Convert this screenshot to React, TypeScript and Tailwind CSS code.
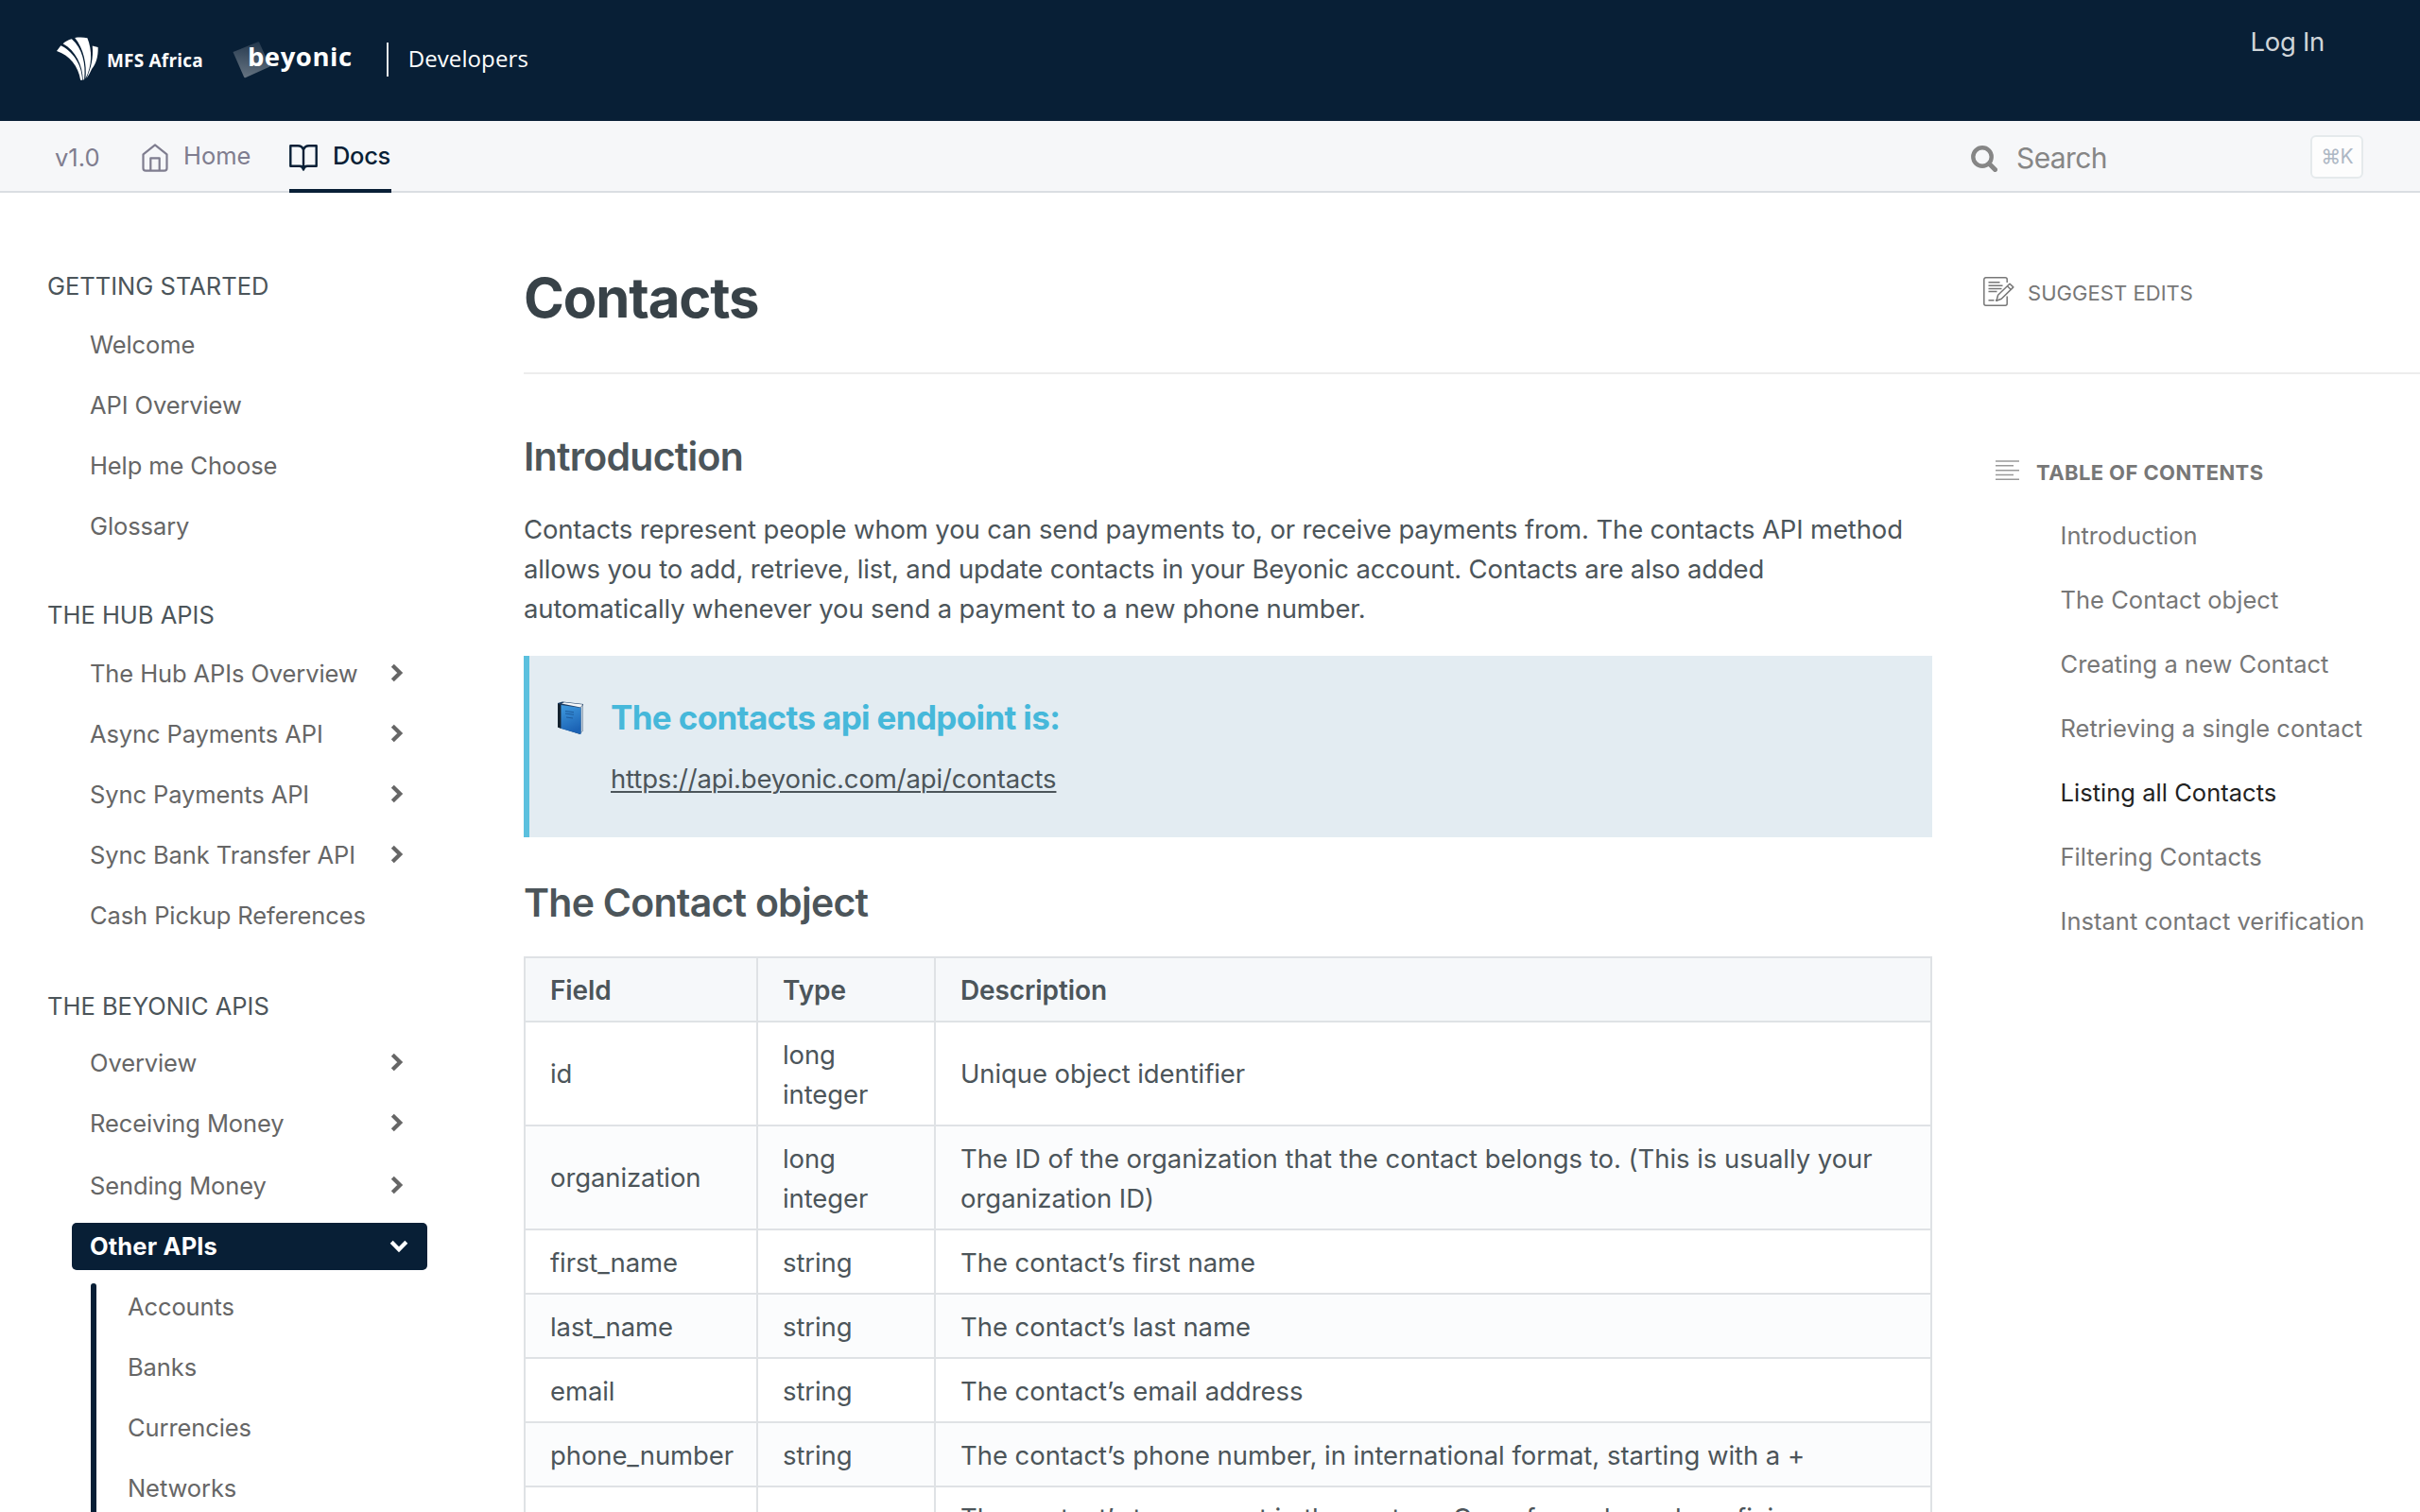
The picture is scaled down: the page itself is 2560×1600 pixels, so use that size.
type NavItem = { label: string; arrow?: boolean; gap?: boolean };

const gettingStarted: NavItem[] = [
  { label: "Welcome" },
  { label: "API Overview" },
  { label: "Help me Choose" },
  { label: "Glossary" },
];

const hubApis: NavItem[] = [
  { label: "The Hub APIs Overview", arrow: true },
  { label: "Async Payments API", arrow: true },
  { label: "Sync Payments API", arrow: true },
  { label: "Sync Bank Transfer API", arrow: true },
  { label: "Cash Pickup References" },
];

const beyonicApis: NavItem[] = [
  { label: "Overview", arrow: true },
  { label: "Receiving Money", arrow: true },
  { label: "Sending Money", arrow: true, gap: true },
];

const otherApis = ["Accounts", "Banks", "Currencies", "Networks"];

const toc = [
  "Introduction",
  "The Contact object",
  "Creating a new Contact",
  "Retrieving a single contact",
  "Listing all Contacts",
  "Filtering Contacts",
  "Instant contact verification",
];

const rows = [
  ["id", "long integer", "Unique object identifier"],
  [
    "organization",
    "long integer",
    "The ID of the organization that the contact belongs to. (This is usually your organization ID)",
  ],
  ["first_name", "string", "The contact’s first name"],
  ["last_name", "string", "The contact’s last name"],
  ["email", "string", "The contact’s email address"],
  ["phone_number", "string", "The contact’s phone number, in international format, starting with a +"],
  ["type", "string", "The contact’s type as set in the system. One of: sender or beneficiary"],
];

function MfsLogo() {
  return (
    <svg viewBox="28 28 137 142" className="mt-[39px] h-[47px] w-[46px] shrink-0" fill="#fff">
      <path d="M30 73 43 56C78 72 110 112 112 166h-6C100 122 70 86 30 73Z" />
      <path d="M50 50C58 43 67 38 78 35c34 30 46 80 40 129l-4 2C113 118 90 72 50 50Z" />
      <path d="M88 31c12-2 28-2 40 1 16 40 16 88-6 130C127 116 116 66 88 31Z" />
      <path d="M144 57l18 4c1 32-7 54-20 70-5 12-11 22-17 30 14-30 23-66 19-104Z" />
    </svg>
  );
}

function BeyonicMark() {
  return (
    <svg viewBox="0 0 40 39" className="mt-11 -mr-[24px] h-[39px] w-10 shrink-0">
      <defs>
        <linearGradient id="mark" x1="0.6" y1="0" x2="0.45" y2="1">
          <stop offset="0" stopColor="#24384d" />
          <stop offset="1" stopColor="#647280" />
        </linearGradient>
      </defs>
      <path d="M0.5 11 27 0.3q1-.3 1.400.6L39.500 26.500 13.500 38.200q-1 .3-1.400-.6Z" fill="url(#mark)" />
    </svg>
  );
}

function HomeIcon() {
  return (
    <svg viewBox="0 0 28 30" className="mt-6 h-[30px] w-7" fill="none" stroke="#7f7d8f" strokeWidth="2.200" strokeLinejoin="round">
      <path d="M1.500 11.300 14 1.400l12.500 9.900V26a2.700 2.700 0 0 1-2.700 2.700H4.200A2.700 2.700 0 0 1 1.500 26Z" />
      <path d="M9.300 28.500V15.300h9.400v13.200" />
    </svg>
  );
}

function BookIcon() {
  return (
    <svg viewBox="0 0 30 28" className="mt-[25px] h-7 w-[30px]" fill="none" stroke="#081f36" strokeWidth="2.400" strokeLinejoin="round" strokeLinecap="round">
      <path d="M15 5.500C14 2.500 12 1.300 9 1.300H1.300v21.500H11c2.200 0 3.500 1 4 3.700.5-2.700 1.800-3.700 4-3.700h9.700V1.300H21c-3 0-5 1.200-6 4.200Zm0 0v20.500" />
    </svg>
  );
}

function SearchIcon() {
  return (
    <svg viewBox="0 0 28 28" className="mt-[26px] h-7 w-7" fill="none" stroke="#868686">
      <circle cx="12" cy="12" r="9.700" strokeWidth="4.400" />
      <path d="m19.500 19.500 6 6" strokeWidth="5" strokeLinecap="round" />
    </svg>
  );
}

function SuggestIcon() {
  return (
    <svg viewBox="0 0 33 31" className="mt-[89px] h-[31px] w-[33px]" fill="none" stroke="#777" strokeWidth="1.500" strokeLinejoin="round">
      <path d="M25.200 6V2.800a2 2 0 0 0-2-2H2.800a2 2 0 0 0-2 2v25.400a2 2 0 0 0 2 2h20.400a2 2 0 0 0 2-2V20.500" />
      <path d="M5.500 5.800h12M5.500 9.200h15M5.500 12.400h14M5.500 15.600h9M5.500 24.800h6M13 24.800h2" />
      <path d="m14 25.300 1.600-6L28 7.200l3.800 3.700L19.200 23.300Zm11.500-15.500 3.800 3.700" />
    </svg>
  );
}

function TocIcon() {
  return (
    <svg viewBox="0 0 26 22" className="h-[22px] w-[26px]" stroke="#999" strokeWidth="1.500">
      <path d="M0 1h25M0 5.800h19M0 10.700h25M0 15.600h19M0 20.300h25" />
    </svg>
  );
}

function BlueBook() {
  return (
    <svg viewBox="0 0 29 36" className="mt-12 h-9 w-[29px]">
      <defs>
        <linearGradient id="cover" x1="0" y1="0" x2="0.300" y2="1">
          <stop offset="0" stopColor="#3f9be0" />
          <stop offset="1" stopColor="#1b62b4" />
        </linearGradient>
      </defs>
      <path d="M1 2 6 .5 28 3v28l-3.500 4L1 27.500Z" fill="#1c3d63" />
      <path d="M5 2.500 8 1.300 27.500 3.500 25 6.500Z" fill="#f4f6f8" />
      <path d="M25.500 6.500 27.700 4v27l-2.200 3Z" fill="#c9d3dc" />
      <path d="M1 2.500 4.500 4v25L1 27.500Z" fill="#14222f" />
      <path d="M4.500 4 25.500 7v28L4.500 29Z" fill="url(#cover)" />
      <path d="m9 10.500 9 1.200M9 13l9 1.200M10 17l7 1" stroke="#1d5c9e" strokeWidth="1" />
    </svg>
  );
}

function Chevron({ down }: { down?: boolean }) {
  return down ? (
    <svg viewBox="0 0 20 14" className="h-[14px] w-5" fill="none" stroke="#fff" strokeWidth="4.200">
      <path d="m2.200 2.300 7.800 7.900 7.800-7.900" />
    </svg>
  ) : (
    <svg viewBox="0 0 14 20" className="h-5 w-[14px] -translate-y-px" fill="none" stroke="#666" strokeWidth="4.200">
      <path d="m2.300 2.200 7.900 7.800-7.900 7.800" />
    </svg>
  );
}

function NavList({ items }: { items: NavItem[] }) {
  return (
    <ul className="pl-[95px]">
      {items.map((it) => (
        <li
          key={it.label}
          className={
            it.gap
              ? "mt-0.5 flex h-16 items-center justify-between pr-10"
              : "flex h-16 items-center justify-between pr-10"
          }
        >
          <span className="leading-[64px]">{it.label}</span>
          {it.arrow && <Chevron />}
        </li>
      ))}
    </ul>
  );
}

function SectionTitle({ children }: { children: string }) {
  return <h3 className="pl-[50px] leading-[64px] tracking-normal text-[#4c555a]">{children}</h3>;
}

function cellClass(row: number, col: number) {
  if (row === 6) return "border-r-2 border-b-2 border-[#dfe2e5] px-[26px] pt-[11px] pb-[13px] tracking-[-0.03px]";
  if ((row === 0 && col !== 1) || (row === 1 && col === 0))
    return "border-r-2 border-b-2 border-[#dfe2e5] px-[26px] pt-[12px] pb-[12px]";
  return col === 2
    ? "border-r-2 border-b-2 border-[#dfe2e5] px-[26px] pt-[13px] pb-[11px] tracking-[-0.04px]"
    : "border-r-2 border-b-2 border-[#dfe2e5] px-[26px] pt-[13px] pb-[11px]";
}

export default function App() {
  return (
    <div className="flex h-[1600px] w-[2560px] flex-col overflow-hidden bg-white font-['Inter',sans-serif] font-[430] text-[#4c555a]">
      <header className="flex h-32 shrink-0 items-start bg-[#081f36] pr-[101px] pl-[59px] text-white">
        <MfsLogo />
        <span className="mt-[51px] ml-2 font-['Open_Sans',sans-serif] text-[19px] leading-[26px] font-bold tracking-[0.2px] whitespace-nowrap">
          MFS Africa
        </span>
        <div className="ml-[31px] flex items-start">
          <BeyonicMark />
          <span className="relative mt-[41px] font-['Open_Sans',sans-serif] text-[27.5px] leading-[37px] font-bold tracking-[0.55px]">
            beyonic
          </span>
        </div>
        <div className="mt-[45px] ml-[36px] h-9 w-0.5 bg-white/90" />
        <span className="mt-[45px] ml-[21px] font-['Open_Sans',sans-serif] text-2xl leading-[33px] font-normal tracking-[0.1px]">
          Developers
        </span>
        <span className="mt-[27px] ml-auto text-[27.5px] leading-[34px] tracking-[-0.3px] text-[#d0d5d9]">Log In</span>
      </header>

      <nav className="flex h-[76px] shrink-0 items-start border-b-2 border-[#dadee2] bg-[#f6f7f9] pr-[60px] pl-[58px] text-[25.5px] leading-[31px] text-[#7f7d8f]">
        <span className="mt-[23px] w-[92px]">v1.0</span>
        <HomeIcon />
        <span className="mt-[21px] ml-4 w-28">Home</span>
        <div className="flex h-[76px] w-[108px] items-start border-b-4 border-[#081f36] text-[#081f36]">
          <BookIcon />
          <span className="mt-[21px] ml-4 font-medium tracking-[-0.3px]">Docs</span>
        </div>
        <div className="ml-auto flex w-[415px] items-start">
          <SearchIcon />
          <span className="mt-[21px] ml-5 text-[30px] leading-9 tracking-[-0.6px] text-[#868686]">Search</span>
          <kbd className="mt-[15px] ml-auto flex h-[46px] w-14 justify-center rounded-md border-2 border-[#e5eaec] bg-[#fdfdfd] pt-2 font-['Inter',sans-serif] text-[21px] leading-[25px] tracking-[-0.8px] text-[#adb7c4]">
            ⌘K
          </kbd>
        </div>
      </nav>

      <div className="flex min-h-0 flex-1">
        <aside className="w-[467px] shrink-0 pt-[67px] text-[25.5px] tracking-[-0.1px] text-[#666]">
          <SectionTitle>GETTING STARTED</SectionTitle>
          <div className="-mt-0.5">
            <NavList items={gettingStarted} />
          </div>
          <div className="mt-[30px]">
            <SectionTitle>THE HUB APIS</SectionTitle>
          </div>
          <div className="-mt-0.5">
            <NavList items={hubApis} />
          </div>
          <div className="mt-8">
            <SectionTitle>THE BEYONIC APIS</SectionTitle>
          </div>
          <div className="-mt-1">
            <NavList items={beyonicApis} />
          </div>
          <div className="mt-[7px] ml-[76px] flex h-[50px] w-[376px] items-center justify-between rounded-[5px] bg-[#081f36] pr-5 pl-[19px] leading-[50px] font-bold tracking-[0.15px] text-white">
            <span>Other APIs</span>
            <Chevron down />
          </div>
          <div className="mt-[7px] flex pl-24">
            <div className="mt-[7px] w-1.5 rounded-t-[3px] bg-[#081f36]" />
            <ul className="pb-10 pl-[33px] leading-[64px]">
              {otherApis.map((t) => (
                <li key={t}>{t}</li>
              ))}
            </ul>
          </div>
        </aside>

        <div className="flex min-w-0 flex-1 flex-col pl-[87px]">
          <div className="flex h-48 shrink-0 items-start border-b-2 border-[#ededed]">
            <h1 className="mt-[76px] w-[1544px] text-[58px] leading-[70px] font-bold tracking-[-1.1px] text-[#384248]">Contacts</h1>
            <SuggestIcon />
            <span className="mt-[93px] ml-3.5 text-[22px] leading-[26px] tracking-[0.05px] text-[#777]">SUGGEST EDITS</span>
          </div>

          <div className="flex">
            <main className="w-[1490px] shrink-0 text-[27.5px] leading-[42px] tracking-[-0.1px]">
              <h2 className="mt-[62px] text-[41px] leading-[50px] font-[640] tracking-[-0.75px]">Introduction</h2>
              <p className="mt-[31px] tracking-[-0.15px]">
                Contacts represent people whom you can send payments to, or receive payments from. The contacts API method
                <br />
                allows you to add, retrieve, list, and update contacts in your Beyonic account. Contacts are also added
                <br />
                automatically whenever you send a payment to a new phone number.
              </p>
              <div className="mt-[29px] flex h-48 items-start border-l-[6px] border-[#5bc0de] bg-[#e3ecf2] pl-[29px]">
                <BlueBook />
                <div className="mt-11 ml-7">
                  <h3 className="text-[35px] leading-[42px] font-[650] tracking-[-0.65px] text-[#46b8da]">The contacts api endpoint is:</h3>
                  <a className="mt-[23px] block tracking-[-0.15px] underline decoration-2 underline-offset-[3px]">
                    https://api.beyonic.com/api/contacts
                  </a>
                </div>
              </div>
              <h2 className="mt-11 text-[41px] leading-[50px] font-[640] tracking-[-0.75px]">The Contact object</h2>
              <table className="mt-8 w-[1490px] table-fixed border-separate border-spacing-0 border-t-2 border-l-2 border-[#dfe2e5]">
                <colgroup>
                  <col className="w-[246px]" />
                  <col className="w-[188px]" />
                  <col />
                </colgroup>
                <thead>
                  <tr className="bg-[#f6f8fa] text-left">
                    {["Field", "Type", "Description"].map((h) => (
                      <th key={h} className="border-r-2 border-b-2 border-[#dfe2e5] px-[26px] pt-[13px] pb-[11px] text-[28px] font-semibold">
                        {h}
                      </th>
                    ))}
                  </tr>
                </thead>
                <tbody>
                  {rows.map((r, ri) => (
                    <tr key={r[0]} className="even:bg-[#fbfcfd]">
                      {r.map((c, i) => (
                        <td key={i} className={cellClass(ri, i)}>
                          {ri === 6 && i < 2 ? <div className="h-[84px]" /> : ri === 6 ? <div className="h-[84px]">{c}</div> : c}
                        </td>
                      ))}
                    </tr>
                  ))}
                </tbody>
              </table>
            </main>

            <aside className="ml-[67px] pt-[91px] text-[#777]">
              <div className="flex items-start">
                <TocIcon />
                <h4 className="ml-[17px] text-[22px] leading-[26px] font-bold tracking-[0.4px] whitespace-nowrap">TABLE OF CONTENTS</h4>
              </div>
              <ul className="mt-5 pl-[68.500px] text-[25.5px] leading-[68px] tracking-[0.03px] whitespace-nowrap">
                {toc.map((t) => (
                  <li key={t} className={t === "Listing all Contacts" ? "text-[#222]" : "text-[#777]"}>
                    {t}
                  </li>
                ))}
              </ul>
            </aside>
          </div>
        </div>
      </div>
    </div>
  );
}
